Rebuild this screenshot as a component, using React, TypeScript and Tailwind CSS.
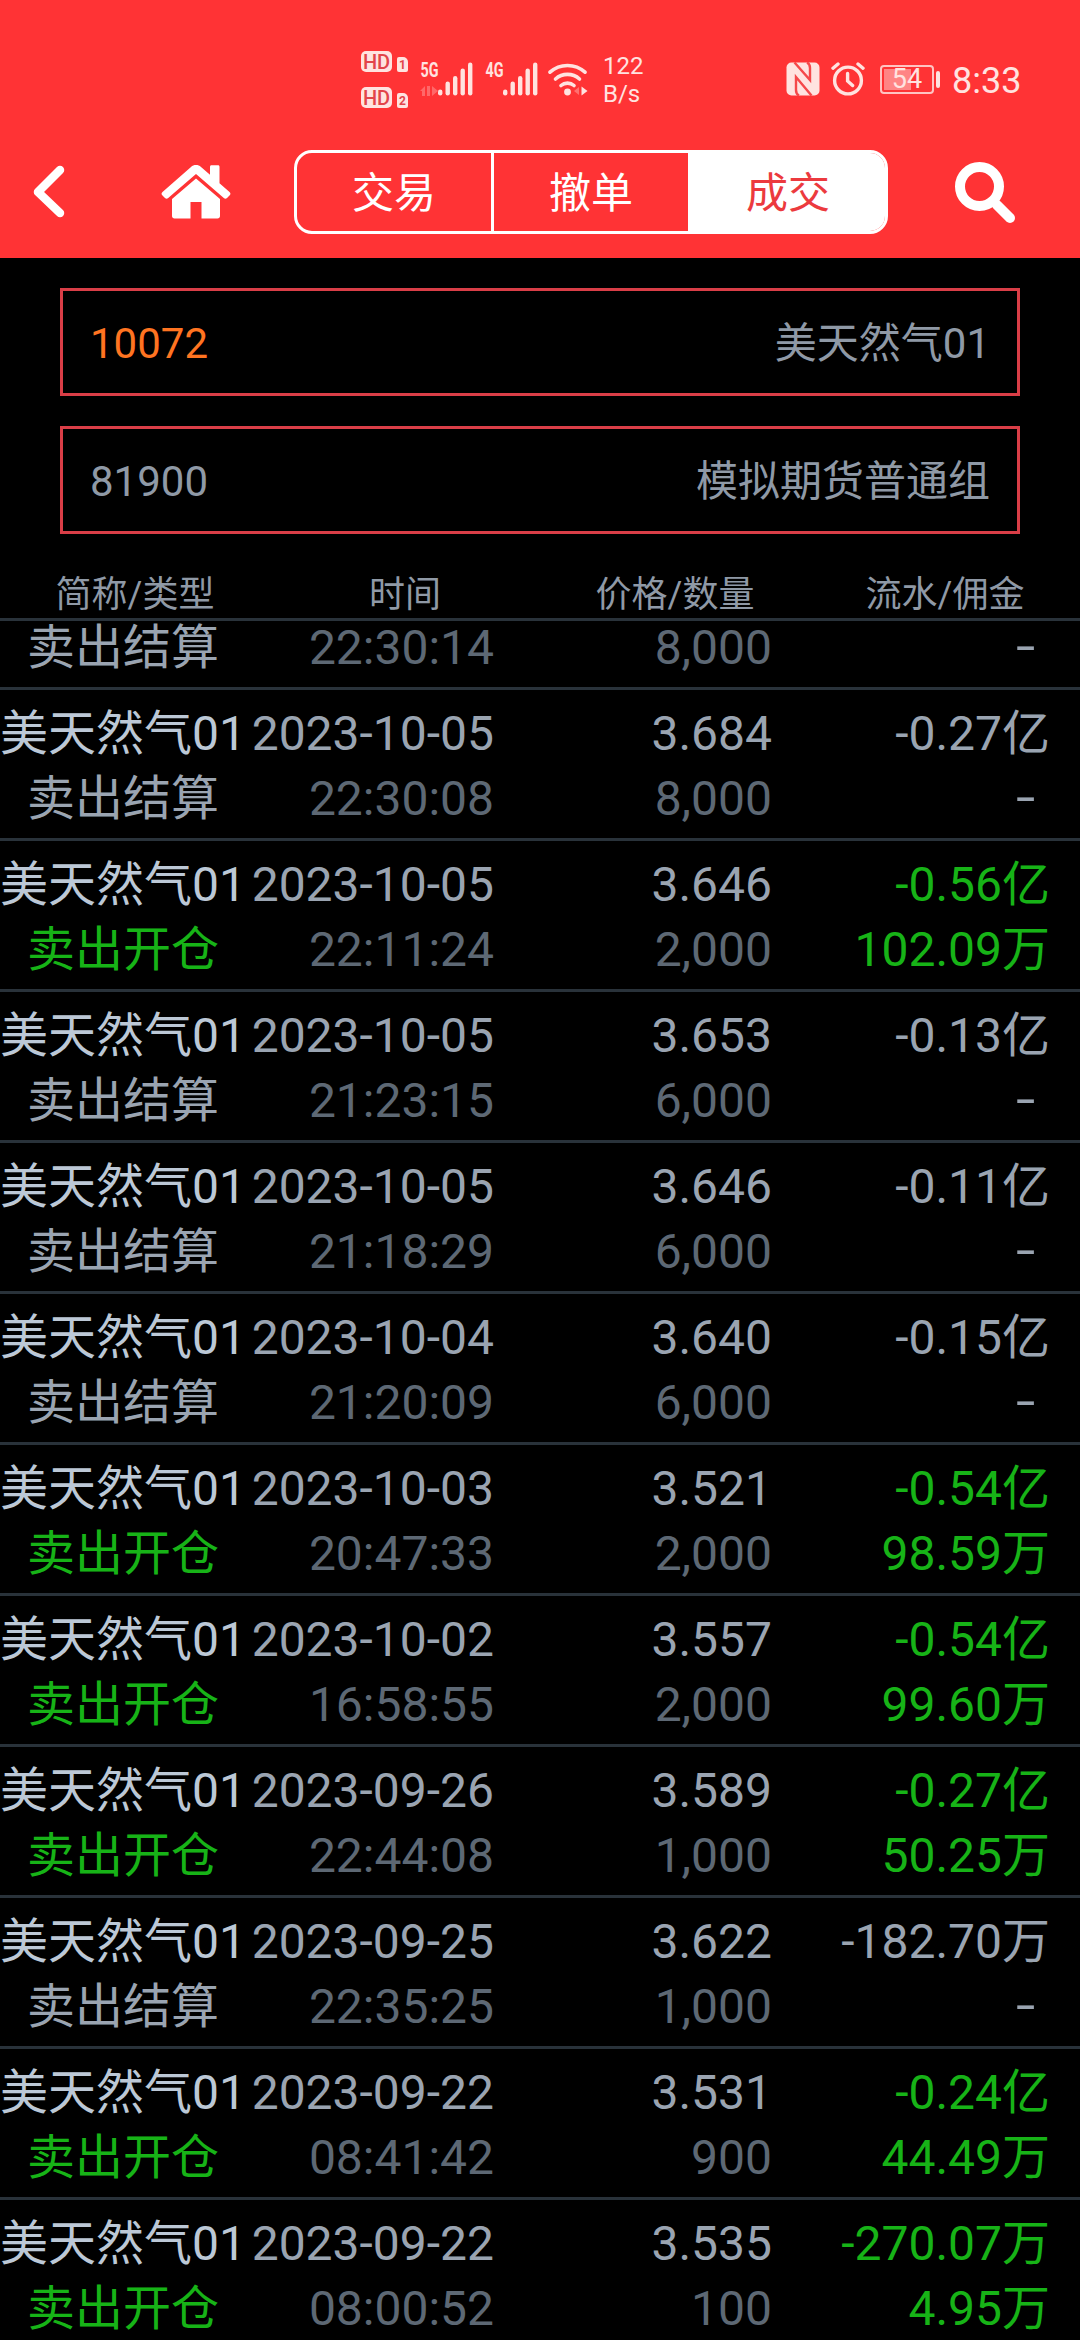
type Trade = {
  type: string;
  date: string;
  time: string;
  price: string;
  count: string;
  amount: string;
  fee?: string;
};

const OPEN = "卖出开仓";
const SETTLE = "卖出结算";

const trades: Trade[] = [
  { type: SETTLE, date: "2023-10-05", time: "22:30:08", price: "3.684", count: "8,000", amount: "-0.27亿" },
  { type: OPEN, date: "2023-10-05", time: "22:11:24", price: "3.646", count: "2,000", amount: "-0.56亿", fee: "102.09万" },
  { type: SETTLE, date: "2023-10-05", time: "21:23:15", price: "3.653", count: "6,000", amount: "-0.13亿" },
  { type: SETTLE, date: "2023-10-05", time: "21:18:29", price: "3.646", count: "6,000", amount: "-0.11亿" },
  { type: SETTLE, date: "2023-10-04", time: "21:20:09", price: "3.640", count: "6,000", amount: "-0.15亿" },
  { type: OPEN, date: "2023-10-03", time: "20:47:33", price: "3.521", count: "2,000", amount: "-0.54亿", fee: "98.59万" },
  { type: OPEN, date: "2023-10-02", time: "16:58:55", price: "3.557", count: "2,000", amount: "-0.54亿", fee: "99.60万" },
  { type: OPEN, date: "2023-09-26", time: "22:44:08", price: "3.589", count: "1,000", amount: "-0.27亿", fee: "50.25万" },
  { type: SETTLE, date: "2023-09-25", time: "22:35:25", price: "3.622", count: "1,000", amount: "-182.70万" },
  { type: OPEN, date: "2023-09-22", time: "08:41:42", price: "3.531", count: "900", amount: "-0.24亿", fee: "44.49万" },
  { type: OPEN, date: "2023-09-22", time: "08:00:52", price: "3.535", count: "100", amount: "-270.07万", fee: "4.95万" },
];

const HdBadge = ({ sim }: { sim: string }) => (
  <div className="flex h-[22px] items-end gap-[5px]">
    <span className="flex h-[21px] w-[31px] items-center justify-center rounded-[5px] bg-[#ffe3e0] text-[20px] leading-none font-medium text-[#e2444a]">
      HD
    </span>
    <span className="flex h-[15px] w-[11px] items-center justify-center rounded-[2px] rounded-tr-[5px] bg-[#ffe3e0] text-[12px] leading-none font-bold text-[#e2444a]">
      {sim}
    </span>
  </div>
);

const Signal = ({ label, data }: { label: string; data?: boolean }) => (
  <svg width="54" height="42" viewBox="0 -8 54 42" fill="#ffe3e0">
    <text x="0.5" y="15" fontSize="20" fontWeight="700" textLength="18" lengthAdjust="spacingAndGlyphs">
      {label}
    </text>
    {data && <path opacity="0.3" d="M0 29l5-5v10h-3v-5zM7 24h3v10h-3zM12 24l6 5-6 5z" />}
    <rect x="18" y="27.5" width="4.4" height="6" rx="2.2" />
    <rect x="25.5" y="19.5" width="4.4" height="14" rx="2.2" />
    <rect x="33" y="14" width="4.4" height="19.5" rx="2.2" />
    <rect x="40.5" y="6.5" width="4.4" height="27" rx="2.2" />
    <rect x="48" y="0.5" width="4.4" height="33" rx="2.2" />
  </svg>
);

const WifiIcon = () => (
  <svg width="40" height="34" viewBox="0 0 40 34" fill="none" stroke="#ffe3e0" strokeWidth="3.6" strokeLinecap="round">
    <path d="M2 10.2a26 26 0 0 1 35 0" />
    <path d="M7.5 17a18 18 0 0 1 24 0" />
    <path d="M13 23.500a10 10 0 0 1 13 0" />
    <circle cx="19.5" cy="30" r="3.4" fill="#ffe3e0" stroke="none" />
    <path d="M31 25v8l-5-4z" fill="#ffe3e0" stroke="none" opacity="0.35" />
    <path d="M33.5 24.5v9l6-4.5z" fill="#ffe3e0" stroke="none" />
  </svg>
);

const NfcIcon = () => (
  <svg width="34" height="34" viewBox="0 0 34 34">
    <rect x="0.5" y="0.5" width="33" height="33" rx="5" fill="#ffe3e0" />
    <g fill="none" stroke="#f5484a" strokeWidth="2.4">
      <path d="M8.500 0.500L24 18V6Q24 2 21 0.500" />
      <path d="M25.500 33.500L10 15V28Q10 32 13 33.500" />
    </g>
  </svg>
);

const AlarmIcon = () => (
  <svg width="34" height="34" viewBox="0 0 34 34" fill="none" stroke="#ffe3e0" strokeWidth="3.4" strokeLinecap="round">
    <circle cx="17" cy="18.5" r="13.4" />
    <path d="M16.6 11.5v7.5l5 4.5M2 6.2l5-4.2M32 6.2l-5-4.2" />
  </svg>
);

const StatusBar = () => (
  <div className="flex h-[130px] items-start text-[#ffe3e0]">
    <div className="mt-[50px] ml-[361px] flex w-[47px] flex-col gap-[14px]">
      <HdBadge sim="1" />
      <HdBadge sim="2" />
    </div>
    <div className="mt-[54px] ml-[12px] flex items-end gap-[11px]">
      <Signal label="5G" data />
      <Signal label="4G" />
      <div className="-ml-[2px]">
        <WifiIcon />
      </div>
    </div>
    <div className="mt-[52px] ml-[15px] flex w-[60px] flex-col text-[24px] leading-[28px]">
      <span>122</span>
      <span>B/s</span>
    </div>
    <div className="mt-[62px] ml-[123px] flex gap-[11px]">
      <NfcIcon />
      <AlarmIcon />
    </div>
    <div className="mt-[65px] ml-[15px] flex items-center gap-[2px]">
      <div className="relative flex h-[29px] w-[54px] items-center justify-center rounded-[4px] border-2 border-[#ffc4c2]">
        <div className="absolute top-[2px] bottom-[2px] left-[2px] w-[27px] bg-[#ff8585]" />
        <span className="relative text-[27px] leading-none">54</span>
      </div>
      <div className="h-[17px] w-[4px] rounded-[2px] bg-[#ffe3e0]" />
    </div>
    <span className="mt-[60px] ml-[12px] text-[36px] leading-[42px]">8:33</span>
  </div>
);

const tabs = ["交易", "撤单", "成交"];

const NavBar = () => (
  <div className="flex h-[128px] items-start pt-5 text-white">
    <svg className="mt-[15px] ml-[32px]" width="34" height="54" viewBox="0 0 34 54" fill="none" stroke="white">
      <path d="M28 5L6 27L28 48" strokeWidth="8.5" strokeLinecap="round" strokeLinejoin="round" />
    </svg>
    <svg className="mt-[14px] ml-[95px]" width="70" height="56" viewBox="0 0 70 56" fill="white">
      <path d="M35 1C33 1 31.5 1.6 30 3L1.5 28C0 29.5 0.5 30.5 1.5 31.5L4 34C5 35 6.2 34.8 7.2 34L35 10L62.8 34C63.8 34.8 65 35 66 34L68.5 31.5C69.5 30.5 70 29.5 68.5 28L58.5 19.2V3C58.5 1.8 58 1.2 57 1.2H50.500C49.5 1.2 49 1.8 49 3V10.800L40 3C38.5 1.6 37 1 35 1Z" />
      <path d="M35 14.5L11 35V52C11 53.5 12 54.5 13.5 54.5H29.5V38H40.5V54.5H56.5C58 54.5 59 53.5 59 52V35Z" />
    </svg>
    <div className="ml-[63px] flex h-[84px] w-[594px] overflow-hidden rounded-[18px] border-3 border-white text-[42px]">
      {tabs.map((tab, i) => (
        <div
          key={tab}
          className={
            i === 2
              ? "flex flex-1 items-center justify-center bg-white pt-[3px] text-[#ec3a3e]"
              : "flex flex-1 items-center justify-center border-r-3 border-white pt-[3px]"
          }
        >
          {tab}
        </div>
      ))}
    </div>
    <svg className="mt-[10px] ml-[66px]" width="64" height="64" viewBox="0 0 64 64" fill="none" stroke="white">
      <circle cx="25.5" cy="26.5" r="19.5" strokeWidth="10" />
      <path d="M43 45L56 58" strokeWidth="10" strokeLinecap="round" />
    </svg>
  </div>
);

const Field = ({ code, name, active }: { code: string; name: string; active?: boolean }) => (
  <div className="flex h-[108px] items-center justify-between border-3 border-[#d93e47] px-[27px] pt-[3px] text-[42px] text-[#8f99a6]">
    <span className={active ? "text-[#ff7421]" : ""}>{code}</span>
    <span>{name}</span>
  </div>
);

const Fee = ({ fee }: { fee?: string }) =>
  fee ? <span>{fee}</span> : <span className="mr-[18px] inline-block -translate-y-px scale-x-[1.45]">-</span>;

const TradeRow = ({ trade }: { trade: Trade }) => {
  const isOpen = trade.type === OPEN;

  return (
    <div className="flex h-[151px] shrink-0 border-b-3 border-[#29323a] pt-[11px] text-[48px] leading-[65px] whitespace-nowrap text-[#9aa4b1]">
      <div className="flex w-[246px] flex-col items-center">
        <span className="text-[#bcc8d6]">美天然气01</span>
        <span className={isOpen ? "text-[#17b317]" : ""}>{trade.type}</span>
      </div>
      <div className="flex w-[248px] flex-col items-end">
        <span>{trade.date}</span>
        <span className="text-[#5d6874]">{trade.time}</span>
      </div>
      <div className="flex w-[278px] flex-col items-end">
        <span>{trade.price}</span>
        <span className="text-[#5d6874]">{trade.count}</span>
      </div>
      <div className={isOpen ? "flex w-[278px] flex-col items-end text-[#17b317]" : "flex w-[278px] flex-col items-end"}>
        <span>{trade.amount}</span>
        <Fee fee={trade.fee} />
      </div>
    </div>
  );
};

const columns = ["简称/类型", "时间", "价格/数量", "流水/佣金"];

const App = () => {
  return (
    <div className="flex h-[2340px] w-[1080px] flex-col overflow-hidden bg-black font-['Roboto','Noto_Sans_CJK_SC',sans-serif]">
      <div className="h-[258px] shrink-0 bg-[#ff3335]">
        <StatusBar />
        <NavBar />
      </div>

      <div className="flex shrink-0 flex-col gap-[30px] px-[60px] pt-[30px]">
        <Field code="10072" name="美天然气01" active />
        <Field code="81900" name="模拟期货普通组" />
      </div>

      <div className="mt-[30px] grid h-[57px] shrink-0 grid-cols-4 border-b-3 border-[#29323a] pt-[8px] text-center text-[36px] leading-[46px] text-[#8f99a6]">
        {columns.map((column) => (
          <span key={column}>{column}</span>
        ))}
      </div>

      {/* list is scrolled, first record only shows its second line */}
      <div className="flex h-[69px] shrink-0 border-b-3 border-[#29323a] text-[48px] leading-[53px] whitespace-nowrap text-[#9aa4b1]">
        <span className="w-[246px] text-center">{SETTLE}</span>
        <span className="w-[248px] text-right text-[#5d6874]">22:30:14</span>
        <span className="w-[278px] text-right text-[#5d6874]">8,000</span>
        <div className="flex w-[278px] flex-col items-end">
          <Fee />
        </div>
      </div>

      <div className="flex flex-1 flex-col overflow-hidden">
        {trades.map((trade) => (
          <TradeRow key={trade.date + trade.time} trade={trade} />
        ))}
      </div>
    </div>
  );
};

export default App;
